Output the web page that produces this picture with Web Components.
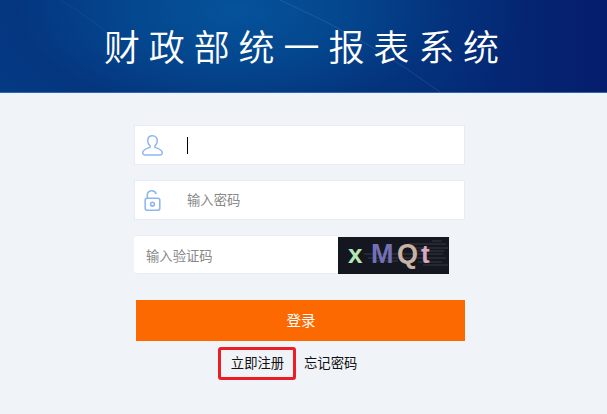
<!DOCTYPE html>
<html lang="zh"><head><meta charset="utf-8"><title>财政部统一报表系统</title>
<style>
html,body{margin:0;padding:0;background:#f0f3f7;}
body{font-family:"Noto Sans CJK SC",sans-serif;width:607px;height:414px;overflow:hidden;}
</style></head><body>
<app-banner>财政部统一报表系统</app-banner>
<login-form>
  <login-field icon="user" caret></login-field>
  <login-field icon="lock" placeholder="输入密码"></login-field>
  <captcha-row></captcha-row>
  <login-button>登录</login-button>
  <login-links></login-links>
</login-form>
<script>
const F='"Noto Sans CJK SC",sans-serif';
function def(name,html){customElements.define(name,class extends HTMLElement{connectedCallback(){if(this.shadowRoot)return;const r=this.attachShadow({mode:'open'});r.innerHTML=typeof html==='function'?html(this):html;}});}
def('app-banner',`<style>
:host{display:flex;box-sizing:border-box;height:93px;align-items:center;justify-content:center;position:relative;overflow:hidden;
background:radial-gradient(ellipse 290px 140px at 235px 10px,#05529b 0%,#04488f 35%,rgba(4,52,125,.6) 75%,rgba(4,52,125,0) 100%),linear-gradient(90deg,#053a85 0%,#04377f 35%,#042e7a 70%,#051d6c 100%);border-bottom:1px solid #2c66ab;}
svg{position:absolute;inset:0;}
.t{position:relative;color:#fff;font:350 36px/1 ${F};letter-spacing:8.9px;margin-right:-8.9px;padding-bottom:3px;white-space:nowrap;transform:translateX(-2px);}
</style><svg width="607" height="92"><path d="M280 0Q370 40 440 92" stroke="#fff" stroke-opacity=".1" fill="none"/><path d="M60 0Q95 20 120 45" stroke="#fff" stroke-opacity=".05" fill="none"/></svg><div class="t"><slot></slot></div>`);
def('login-form',`<style>:host{display:flex;flex-direction:column;padding:32px 0 0 134px;width:331px;}</style><slot></slot>`);
const ICONS={
user:`<svg width="21" height="21" viewBox="0 0 21 21" fill="none" stroke="#8fb6f2" stroke-width="1.500"><path d="M10.500 .8c-3 0-4.800 2.200-4.800 5 0 2.300 1 4 2.400 5v1.400C6 13.100 1.300 14.500 .8 17.200c-.3 1.700.9 2.800 2.200 2.800h15c1.300 0 2.500-1.100 2.200-2.800-.5-2.700-5.200-4.100-7.300-5v-1.400c1.400-1 2.400-2.700 2.400-5 0-2.800-1.800-5-4.800-5z"/></svg>`,
lock:`<svg width="17" height="21" viewBox="0 0 17 21" fill="none" stroke="#8fb6f2" stroke-width="1.600"><path d="M3.300 8V5C3.300 2.500 5.300 .8 7.800 .8c2.200 0 3.800 1.300 4.400 3.200"/><rect x="1.200" y="8.200" width="14.600" height="12" rx="2"/><circle cx="8.500" cy="14.200" r="1.900"/></svg>`};
def('login-field',h=>`<style>
:host{display:flex;box-sizing:border-box;width:331px;height:40px;background:#fff;border:1px solid #e6ebf4;align-items:center;margin-bottom:15px;}
.i{width:34px;margin-right:18px;display:flex;justify-content:center;}
.p{color:#888;font:13.33px/1 ${F};}
.c{width:1px;height:17px;background:#000;}
</style><div class="i">${ICONS[h.getAttribute('icon')]}</div>${h.hasAttribute('caret')?'<div class="c"></div>':''}<span class="p">${h.getAttribute('placeholder')||''}</span>`);
def('captcha-row',`<style>
:host{display:flex;align-items:flex-end;height:39px;margin-bottom:26px;}
.in{box-sizing:border-box;width:204px;height:39px;background:#fff;border:solid #e9edf5;border-width:1px 0 1px 0;border-radius:3px 0 0 3px;padding:2px 0 0 12px;display:flex;align-items:center;color:#888;font:13.33px/1 ${F};}
svg{display:block;}
</style><div class="in">输入验证码</div>
<svg width="111" height="37" viewBox="0 0 111 37"><rect width="111" height="37" fill="#14171f"/>
<g stroke="#5a5d66" stroke-width=".5"><path d="M26 17H105M30 21H108M70 7H108M74 11H110M78 14H106M80 25H104M85 28H110M34 24H60M94 4H104"/></g>
<g font-family="Liberation Sans,sans-serif" font-weight="700">
<text x="10" y="26" font-size="26" fill="#b7e6b5">x</text>
<text x="33" y="26" font-size="27" fill="#7470b5">M</text>
<text x="59" y="26" font-size="27" fill="#c9b3a5">Q</text>
<text x="83" y="26" font-size="26" fill="#d9a9c3">t</text></g></svg>`);
def('login-button',`<style>
:host{display:block;box-sizing:border-box;width:329px;height:41px;margin-left:2px;padding-left:1px;background:#fb6900;color:#fff;font:14.5px/40px ${F};text-align:center;}
</style><slot></slot>`);
def('login-links',`<style>
:host{display:flex;align-items:center;margin:6px 0 0 84px;color:#111;font:13.33px/1 ${F};}
.r{box-sizing:border-box;width:78px;height:33px;border:3px solid #ee1c25;border-radius:3px;display:flex;align-items:center;justify-content:center;padding:0 0 2px 1px;margin-right:8px;}
.f{padding-bottom:2px;}
</style><span class="r">立即注册</span><span class="f">忘记密码</span>`);
</script>
</body></html>
